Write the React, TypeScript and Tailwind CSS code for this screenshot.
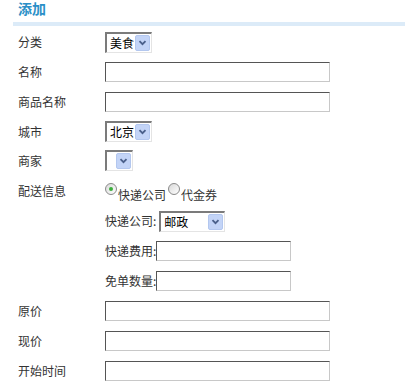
import React from 'react';

const font = { fontFamily: '"Noto Sans CJK SC", "Noto Sans", sans-serif' };

const Chevron = () => (
  <svg width="9" height="6" viewBox="0 0 9 6">
    <path d="M1.5 1.2 L4.5 4.2 L7.5 1.2" fill="none" stroke="#4a5f8a" strokeWidth="1.8" />
  </svg>
);

const FakeSelect = ({ value, width }: { value: string; width: string }) => (
  <div
    className={`${width} h-[21px] flex items-center justify-between bg-white border-t-2 border-l-2 border-b border-r border-t-[#7b7b7b] border-l-[#7b7b7b] border-b-[#e4e4e4] border-r-[#e4e4e4] pl-[3px] pr-[1px]`}
  >
    <span className="text-[12px] leading-none text-black">{value}</span>
    <div className="w-[15px] h-[16px] flex items-center justify-center rounded-[2px] bg-[#c3d4f7] border border-[#b3c7ef]">
      <Chevron />
    </div>
  </div>
);

const TextInput = ({ width = 'w-[225px]' }: { width?: string }) => (
  <div className={`${width} h-[20px] bg-white border border-t-[#555] border-l-[#555] border-b-[#c8c8c8] border-r-[#c8c8c8]`} />
);

const Radio = ({ checked }: { checked?: boolean }) => (
  <div className="w-[12px] h-[12px] rounded-full border border-[#8a8a8a] bg-gradient-to-br from-[#d9d9d9] to-white flex items-center justify-center">
    {checked && <div className="w-[4px] h-[4px] rounded-full bg-[#3cae3c]" />}
  </div>
);

const Row = ({ label, h = 'h-[30px]', children }: { label: string; h?: string; children: React.ReactNode }) => (
  <div className={`flex items-center ${h}`}>
    <div className="w-[105px] shrink-0 pl-[18px] text-[12px] text-[#333]">{label}</div>
    {children}
  </div>
);

const SubRow = ({ label, children }: { label: string; children: React.ReactNode }) => (
  <div className="flex items-center h-[30px] pl-[105px]">
    <span className="text-[12px] text-[#333]">{label}</span>
    {children}
  </div>
);

export default function App() {
  return (
    <div className="w-[405px] h-[390px] bg-white overflow-hidden" style={font}>
      {/* header */}
      <div className="pl-[18px] text-[14px] leading-[17px] font-bold text-[#2a8fc7]">添加</div>
      <div className="ml-[13px] mt-[5px] h-[4px] bg-[#dcebf8]" />
      <div className="h-[1px]" />
      <Row label="分类">
        <FakeSelect value="美食" width="w-[47px]" />
      </Row>
      <Row label="名称">
        <TextInput />
      </Row>
      <Row label="商品名称">
        <TextInput />
      </Row>
      <Row label="城市" h="h-[29px]">
        <FakeSelect value="北京" width="w-[47px]" />
      </Row>
      <Row label="商家" h="h-[29px]">
        <FakeSelect value="" width="w-[28px]" />
      </Row>
      {/* delivery */}
      <div className="flex h-[31px] pt-[8px]">
        <div className="w-[105px] shrink-0 pl-[18px] text-[12px] text-[#333] leading-[14px] pt-[1px]">配送信息</div>
        <div className="flex items-start">
          <Radio checked />
          <span className="text-[12px] text-[#333] leading-[14px] mt-[5px] ml-[1px]">快递公司</span>
          <div className="ml-[2px]"><Radio /></div>
          <span className="text-[12px] text-[#333] leading-[14px] mt-[5px] ml-[1px]">代金券</span>
        </div>
      </div>
      <SubRow label="快递公司:">
        <div className="ml-[3px]">
          <FakeSelect value="邮政" width="w-[66px]" />
        </div>
      </SubRow>
      <SubRow label="快递费用:">
        <TextInput width="w-[135px]" />
      </SubRow>
      <SubRow label="免单数量:">
        <TextInput width="w-[135px]" />
      </SubRow>
      <Row label="原价">
        <TextInput />
      </Row>
      <Row label="现价">
        <TextInput />
      </Row>
      <Row label="开始时间">
        <TextInput />
      </Row>
    </div>
  );
}
